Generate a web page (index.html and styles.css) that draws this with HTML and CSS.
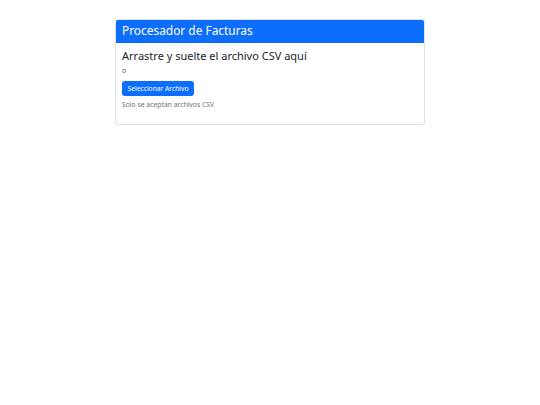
FILE: index.html
```html
<!DOCTYPE html>
<html lang="es">
<head>
<meta charset="utf-8">
<title>Procesador de Facturas</title>
<link rel="stylesheet" href="styles.css">
</head>
<body>
<main class="page">
  <section class="card">
    <header class="card-header">
      <h1 class="card-title">Procesador de Facturas</h1>
    </header>
    <div class="card-body">
      <h2 class="drop-title">Arrastre y suelte el archivo CSV aquí</h2>
      <p class="or">o</p>
      <button class="btn" type="button">Seleccionar Archivo</button>
      <p class="hint">Solo se aceptan archivos CSV</p>
    </div>
  </section>
</main>
</body>
</html>
```

FILE: styles.css
```css
* { box-sizing: border-box; }
html, body { margin: 0; padding: 0; background: #fff; }
body {
  font-family: "Noto Sans", "Open Sans", "DejaVu Sans", sans-serif;
  color: #212529;
}
.page {
  width: 310px;
  margin: 19px 0 0 115px;
}
.card {
  border: 1px solid #dfe1e4;
  border-radius: 3px;
  overflow: hidden;
  background: #fff;
}
.card-header {
  background: #0d6efd;
  padding: 3px 6px 4px;
  height: 23px;
}
.card-title {
  margin: 0;
  font-size: 11.9px;
  font-weight: 400;
  line-height: 15px;
  color: #fff;
}
.card-body {
  padding: 6px 6px 14px;
}
.drop-title {
  margin: 0;
  font-size: 11px;
  font-weight: 400;
  line-height: 14px;
}
.or {
  margin: 3px 0 0;
  font-size: 7px;
  line-height: 10px;
  color: #555;
}
.btn {
  display: block;
  margin-top: 5px;
  width: 72px;
  height: 15px;
  padding: 0;
  border: 0;
  border-radius: 3px;
  background: #0d6efd;
  color: #fff;
  font-family: inherit;
  font-size: 6.7px;
  line-height: 15px;
  text-align: center;
}
.hint {
  margin: 4px 0 0;
  font-size: 6.8px;
  line-height: 10px;
  color: #6c757d;
}
```
